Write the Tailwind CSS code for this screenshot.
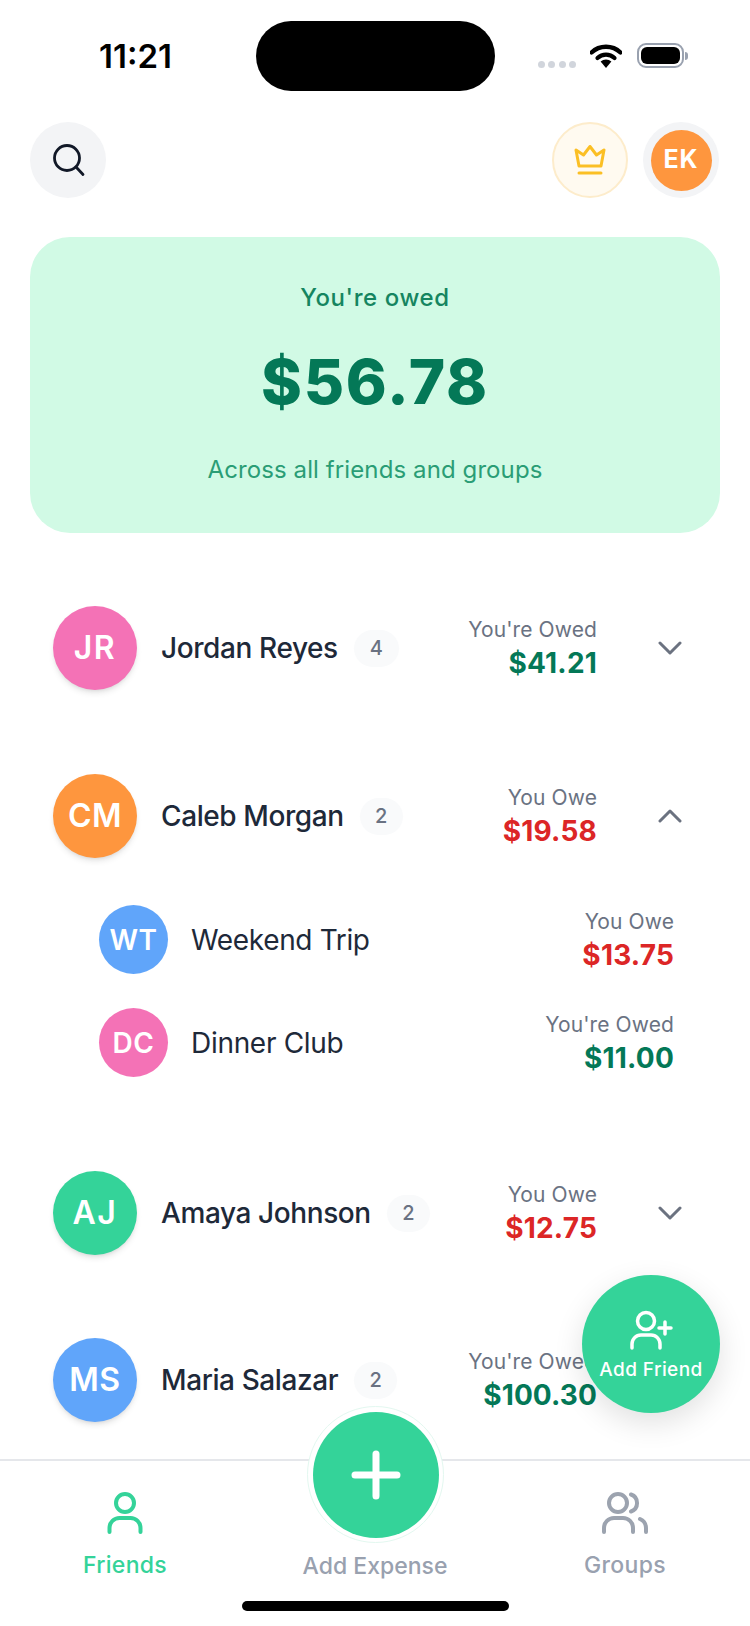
<!DOCTYPE html>
<html lang="en">
<head>
<meta charset="UTF-8">
<meta name="viewport" content="width=device-width, initial-scale=1.0">
<script src="https://cdn.jsdelivr.net/npm/@tailwindcss/browser@4"></script>
<title>Friends</title>
</head>
<body class="bg-white">
<div class="relative w-[750px] h-[1626px] overflow-hidden bg-white flex flex-col font-['Inter',sans-serif]">

	<!-- status bar -->
	<div class="h-[122px] shrink-0 flex items-start">
		<span class="ml-[99px] mt-[36px] text-[33px] leading-[40px] font-semibold text-black">11:21</span>
		<div class="ml-auto mr-[62px] mt-[43px] flex items-start">
			<div class="flex gap-[3.5px] mt-[18px] mr-[14px]">
				<span class="w-[7px] h-[7px] rounded-full bg-gray-300"></span>
				<span class="w-[7px] h-[7px] rounded-full bg-gray-300"></span>
				<span class="w-[7px] h-[7px] rounded-full bg-gray-300"></span>
				<span class="w-[7px] h-[7px] rounded-full bg-gray-300"></span>
			</div>
			<svg width="32" height="24" viewBox="0 0 32 24" class="mt-[1px] mr-[15px]">
				<path d="M1.5 8.5 A21 21 0 0 1 30.5 8.5" fill="none" stroke="#000" stroke-width="4.4" stroke-linecap="round"/>
				<path d="M7.5 14 A12.5 12.5 0 0 1 24.5 14" fill="none" stroke="#000" stroke-width="4.2" stroke-linecap="round"/>
				<path d="M10.6 17.6 A8 8 0 0 1 21.4 17.6 L16 24 Z" fill="#000"/>
			</svg>
			<div class="flex items-center">
				<div class="w-[47px] h-[25px] rounded-[9px] border-2 border-gray-400 p-[2px]">
					<div class="w-full h-full rounded-[6px] bg-black"></div>
				</div>
				<span class="w-[3px] h-[8px] ml-[1px] rounded-r-full bg-gray-400"></span>
			</div>
		</div>
	</div>

	<!-- dynamic island -->
	<div class="absolute left-[256px] top-[21px] w-[239px] h-[70px] rounded-full bg-black"></div>

	<!-- header -->
	<div class="shrink-0 flex items-center pl-[30px] pr-[31px]">
		<div class="w-[76px] h-[76px] rounded-full bg-gray-100 flex items-center justify-center">
			<svg width="34" height="34" viewBox="0 0 34 34" fill="none" stroke="#111827" stroke-width="2.800" stroke-linecap="round">
				<circle cx="16" cy="15" r="12.500"/>
				<path d="M25.500 24.500 L32 31.500"/>
			</svg>
		</div>
		<div class="ml-auto w-[76px] h-[76px] rounded-full bg-[#fffaf0] border-2 border-[#fdeccb] flex items-center justify-center">
			<svg width="32" height="30" viewBox="0 0 32 30" fill="none" stroke="#fbbf24" stroke-width="3" stroke-linecap="round" stroke-linejoin="round">
				<path d="M2 5 L5 21 H27 L30 5 L22.500 10 L16 1.500 L9.500 10 Z"/>
				<path d="M5 28 H27"/>
			</svg>
		</div>
		<div class="ml-[15px] w-[76px] h-[76px] rounded-full bg-gray-100 flex items-center justify-center">
			<div class="w-[61px] h-[61px] rounded-full bg-[#fe963e] flex items-center justify-center text-white text-[25px] font-bold tracking-[0.8px]">EK</div>
		</div>
	</div>

	<!-- balance card -->
	<div class="shrink-0 mt-[39px] mx-[30px] h-[296px] rounded-[40px] bg-[#d1fae5] flex flex-col items-center">
		<p class="mt-[45px] text-[24px] leading-[32px] font-medium text-[#158560] tracking-[0.6px]">You're owed</p>
		<p class="mt-[32px] text-[62px] leading-[72px] font-extrabold text-[#047857] tracking-[1.8px]">$56.78</p>
		<p class="mt-[36px] text-[24px] leading-[32px] text-[#2a9d75] tracking-[0.1px]">Across all friends and groups</p>
	</div>

	<!-- friend list -->
	<div class="flex-1 min-h-0 mt-[73px] pl-[53px] pr-[81px] flex flex-col">

		<div class="flex items-center h-[84px] shrink-0">
			<div class="w-[84px] h-[84px] rounded-full bg-[#f472b6] shadow-md flex items-center justify-center text-white text-[32px] font-semibold tracking-[1.5px]">JR</div>
			<span class="ml-[24px] text-[28px] font-medium text-gray-800 tracking-[-0.4px]">Jordan Reyes</span>
			<span class="ml-[16px] w-[45px] h-[37px] rounded-full bg-gray-50 flex items-center justify-center text-[20px] font-medium text-gray-500">4</span>
			<div class="ml-auto text-right">
				<p class="text-[21px] leading-[30px] text-gray-500 tracking-[0.1px]">You're Owed</p>
				<p class="text-[28px] leading-[36px] font-bold text-[#047857] tracking-[0.2px]">$41.21</p>
			</div>
			<svg width="24" height="14" viewBox="0 0 24 14" fill="none" stroke="#6b7280" stroke-width="3" stroke-linecap="round" stroke-linejoin="round" class="ml-[61px] mr-[-13px]"><path d="M2 2 L12 12 L22 2"/></svg>
		</div>

		<div class="flex items-center h-[84px] shrink-0 mt-[84px]">
			<div class="w-[84px] h-[84px] rounded-full bg-[#fe963e] shadow-md flex items-center justify-center text-white text-[32px] font-semibold tracking-[0.5px]">CM</div>
			<span class="ml-[24px] text-[28px] font-medium text-gray-800 tracking-[-0.4px]">Caleb Morgan</span>
			<span class="ml-[16px] w-[43px] h-[37px] rounded-full bg-gray-50 flex items-center justify-center text-[20px] font-medium text-gray-500">2</span>
			<div class="ml-auto text-right">
				<p class="text-[21px] leading-[30px] text-gray-500 tracking-[0.1px]">You Owe</p>
				<p class="text-[28px] leading-[36px] font-bold text-[#dc2626] tracking-[0.2px]">$19.58</p>
			</div>
			<svg width="24" height="14" viewBox="0 0 24 14" fill="none" stroke="#6b7280" stroke-width="3" stroke-linecap="round" stroke-linejoin="round" class="ml-[61px] mr-[-13px]"><path d="M2 12 L12 2 L22 12"/></svg>
		</div>

		<div class="flex items-center h-[69px] shrink-0 mt-[47px] ml-[46px] mr-[-5px]">
			<div class="w-[69px] h-[69px] rounded-full bg-[#60a5fa] flex items-center justify-center text-white text-[28px] font-semibold tracking-[0.5px]">WT</div>
			<span class="ml-[23px] text-[28px] text-gray-800 tracking-[-0.35px]">Weekend Trip</span>
			<div class="ml-auto text-right">
				<p class="text-[21px] leading-[30px] text-gray-500 tracking-[0.1px]">You Owe</p>
				<p class="text-[28px] leading-[36px] font-bold text-[#dc2626] tracking-[0.2px]">$13.75</p>
			</div>
		</div>

		<div class="flex items-center h-[69px] shrink-0 mt-[34px] ml-[46px] mr-[-5px]">
			<div class="w-[69px] h-[69px] rounded-full bg-[#f472b6] flex items-center justify-center text-white text-[28px] font-semibold tracking-[0.5px]">DC</div>
			<span class="ml-[23px] text-[28px] text-gray-800 tracking-[-0.3px]">Dinner Club</span>
			<div class="ml-auto text-right">
				<p class="text-[21px] leading-[30px] text-gray-500 tracking-[0.1px]">You're Owed</p>
				<p class="text-[28px] leading-[36px] font-bold text-[#047857] tracking-[0.2px]">$11.00</p>
			</div>
		</div>

		<div class="flex items-center h-[84px] shrink-0 mt-[94px]">
			<div class="w-[84px] h-[84px] rounded-full bg-[#34d399] shadow-md flex items-center justify-center text-white text-[32px] font-semibold tracking-[1.5px]">AJ</div>
			<span class="ml-[24px] text-[28px] font-medium text-gray-800 tracking-[-0.4px]">Amaya Johnson</span>
			<span class="ml-[16px] w-[43px] h-[37px] rounded-full bg-gray-50 flex items-center justify-center text-[20px] font-medium text-gray-500">2</span>
			<div class="ml-auto text-right">
				<p class="text-[21px] leading-[30px] text-gray-500 tracking-[0.1px]">You Owe</p>
				<p class="text-[28px] leading-[36px] font-bold text-[#dc2626] tracking-[0.2px]">$12.75</p>
			</div>
			<svg width="24" height="14" viewBox="0 0 24 14" fill="none" stroke="#6b7280" stroke-width="3" stroke-linecap="round" stroke-linejoin="round" class="ml-[61px] mr-[-13px]"><path d="M2 2 L12 12 L22 2"/></svg>
		</div>

		<div class="flex items-center h-[84px] shrink-0 mt-[83px] pr-[72px]">
			<div class="w-[84px] h-[84px] rounded-full bg-[#60a5fa] shadow-md flex items-center justify-center text-white text-[32px] font-semibold tracking-[0.5px]">MS</div>
			<span class="ml-[24px] text-[28px] font-medium text-gray-800 tracking-[-0.4px]">Maria Salazar</span>
			<span class="ml-[16px] w-[43px] h-[37px] rounded-full bg-gray-50 flex items-center justify-center text-[20px] font-medium text-gray-500">2</span>
			<div class="ml-auto text-right">
				<p class="text-[21px] leading-[30px] text-gray-500 tracking-[0.1px]">You're Owed</p>
				<p class="text-[28px] leading-[36px] font-bold text-[#047857] tracking-[0.1px]">$100.30</p>
			</div>
		</div>
	</div>

	<!-- bottom nav -->
	<div class="h-[167px] shrink-0 border-t-2 border-gray-200 bg-white grid grid-cols-3 text-center">
		<div class="flex flex-col items-center pt-[31px]">
			<svg width="36" height="42" viewBox="0 0 36 42" fill="none" stroke="#34d399" stroke-width="4" stroke-linecap="round">
				<circle cx="18" cy="11" r="9"/>
				<path d="M2.5 40 V36 A10 10 0 0 1 12.500 26 H23.500 A10 10 0 0 1 33.500 36 V40"/>
			</svg>
			<span class="mt-[17px] text-[23px] leading-[28px] font-medium text-[#34d399] tracking-[0.3px]">Friends</span>
		</div>
		<div class="flex flex-col items-center pt-[91px]">
			<span class="text-[23px] leading-[28px] font-medium text-gray-400">Add Expense</span>
		</div>
		<div class="flex flex-col items-center pt-[31px]">
			<svg width="46" height="42" viewBox="0 0 46 42" fill="none" stroke="#9ca3af" stroke-width="4" stroke-linecap="round">
				<circle cx="16" cy="11" r="9"/>
				<path d="M2 40 V36 A10 10 0 0 1 12 26 H21 A10 10 0 0 1 31 36 V40"/>
				<path d="M29 2.500 A9 9 0 0 1 29 19.500"/>
				<path d="M38 27 A10 10 0 0 1 44 36 V40"/>
			</svg>
			<span class="mt-[17px] text-[23px] leading-[28px] font-medium text-gray-400 tracking-[0.3px]">Groups</span>
		</div>
	</div>

	<!-- add expense button sits over the nav border -->
	<div class="absolute left-[307px] top-[1406px] w-[137px] h-[137px] rounded-full bg-white border border-[#e3f8f0] flex items-center justify-center">
		<div class="w-[126px] h-[126px] rounded-full bg-[#34d399] flex items-center justify-center">
			<svg width="50" height="50" viewBox="0 0 50 50" fill="none" stroke="#fff" stroke-width="7" stroke-linecap="round">
				<path d="M25 4 V46 M4 25 H46"/>
			</svg>
		</div>
	</div>

	<!-- add friend floating button -->
	<div class="absolute left-[582px] top-[1275px] w-[138px] h-[138px] rounded-full bg-[#34d399] shadow-[0_10px_30px_rgba(0,0,0,0.12)] flex flex-col items-center">
		<svg width="44" height="41" viewBox="0 0 44 41" fill="none" stroke="#fff" stroke-width="3.500" stroke-linecap="round" class="mt-[34px] ml-[2px]">
			<circle cx="16" cy="12" r="8.500"/>
			<path d="M2 39 V35 A9 9 0 0 1 11 26 H21 A9 9 0 0 1 30 35 V39"/>
			<path d="M35 13 V25 M29 19 H41"/>
		</svg>
		<span class="mt-[8px] text-[19px] leading-[24px] font-medium text-white tracking-[0.4px]">Add Friend</span>
	</div>

	<!-- home indicator -->
	<div class="absolute left-[242px] top-[1601px] w-[267px] h-[10px] rounded-full bg-black"></div>
</div>
</body>
</html>
